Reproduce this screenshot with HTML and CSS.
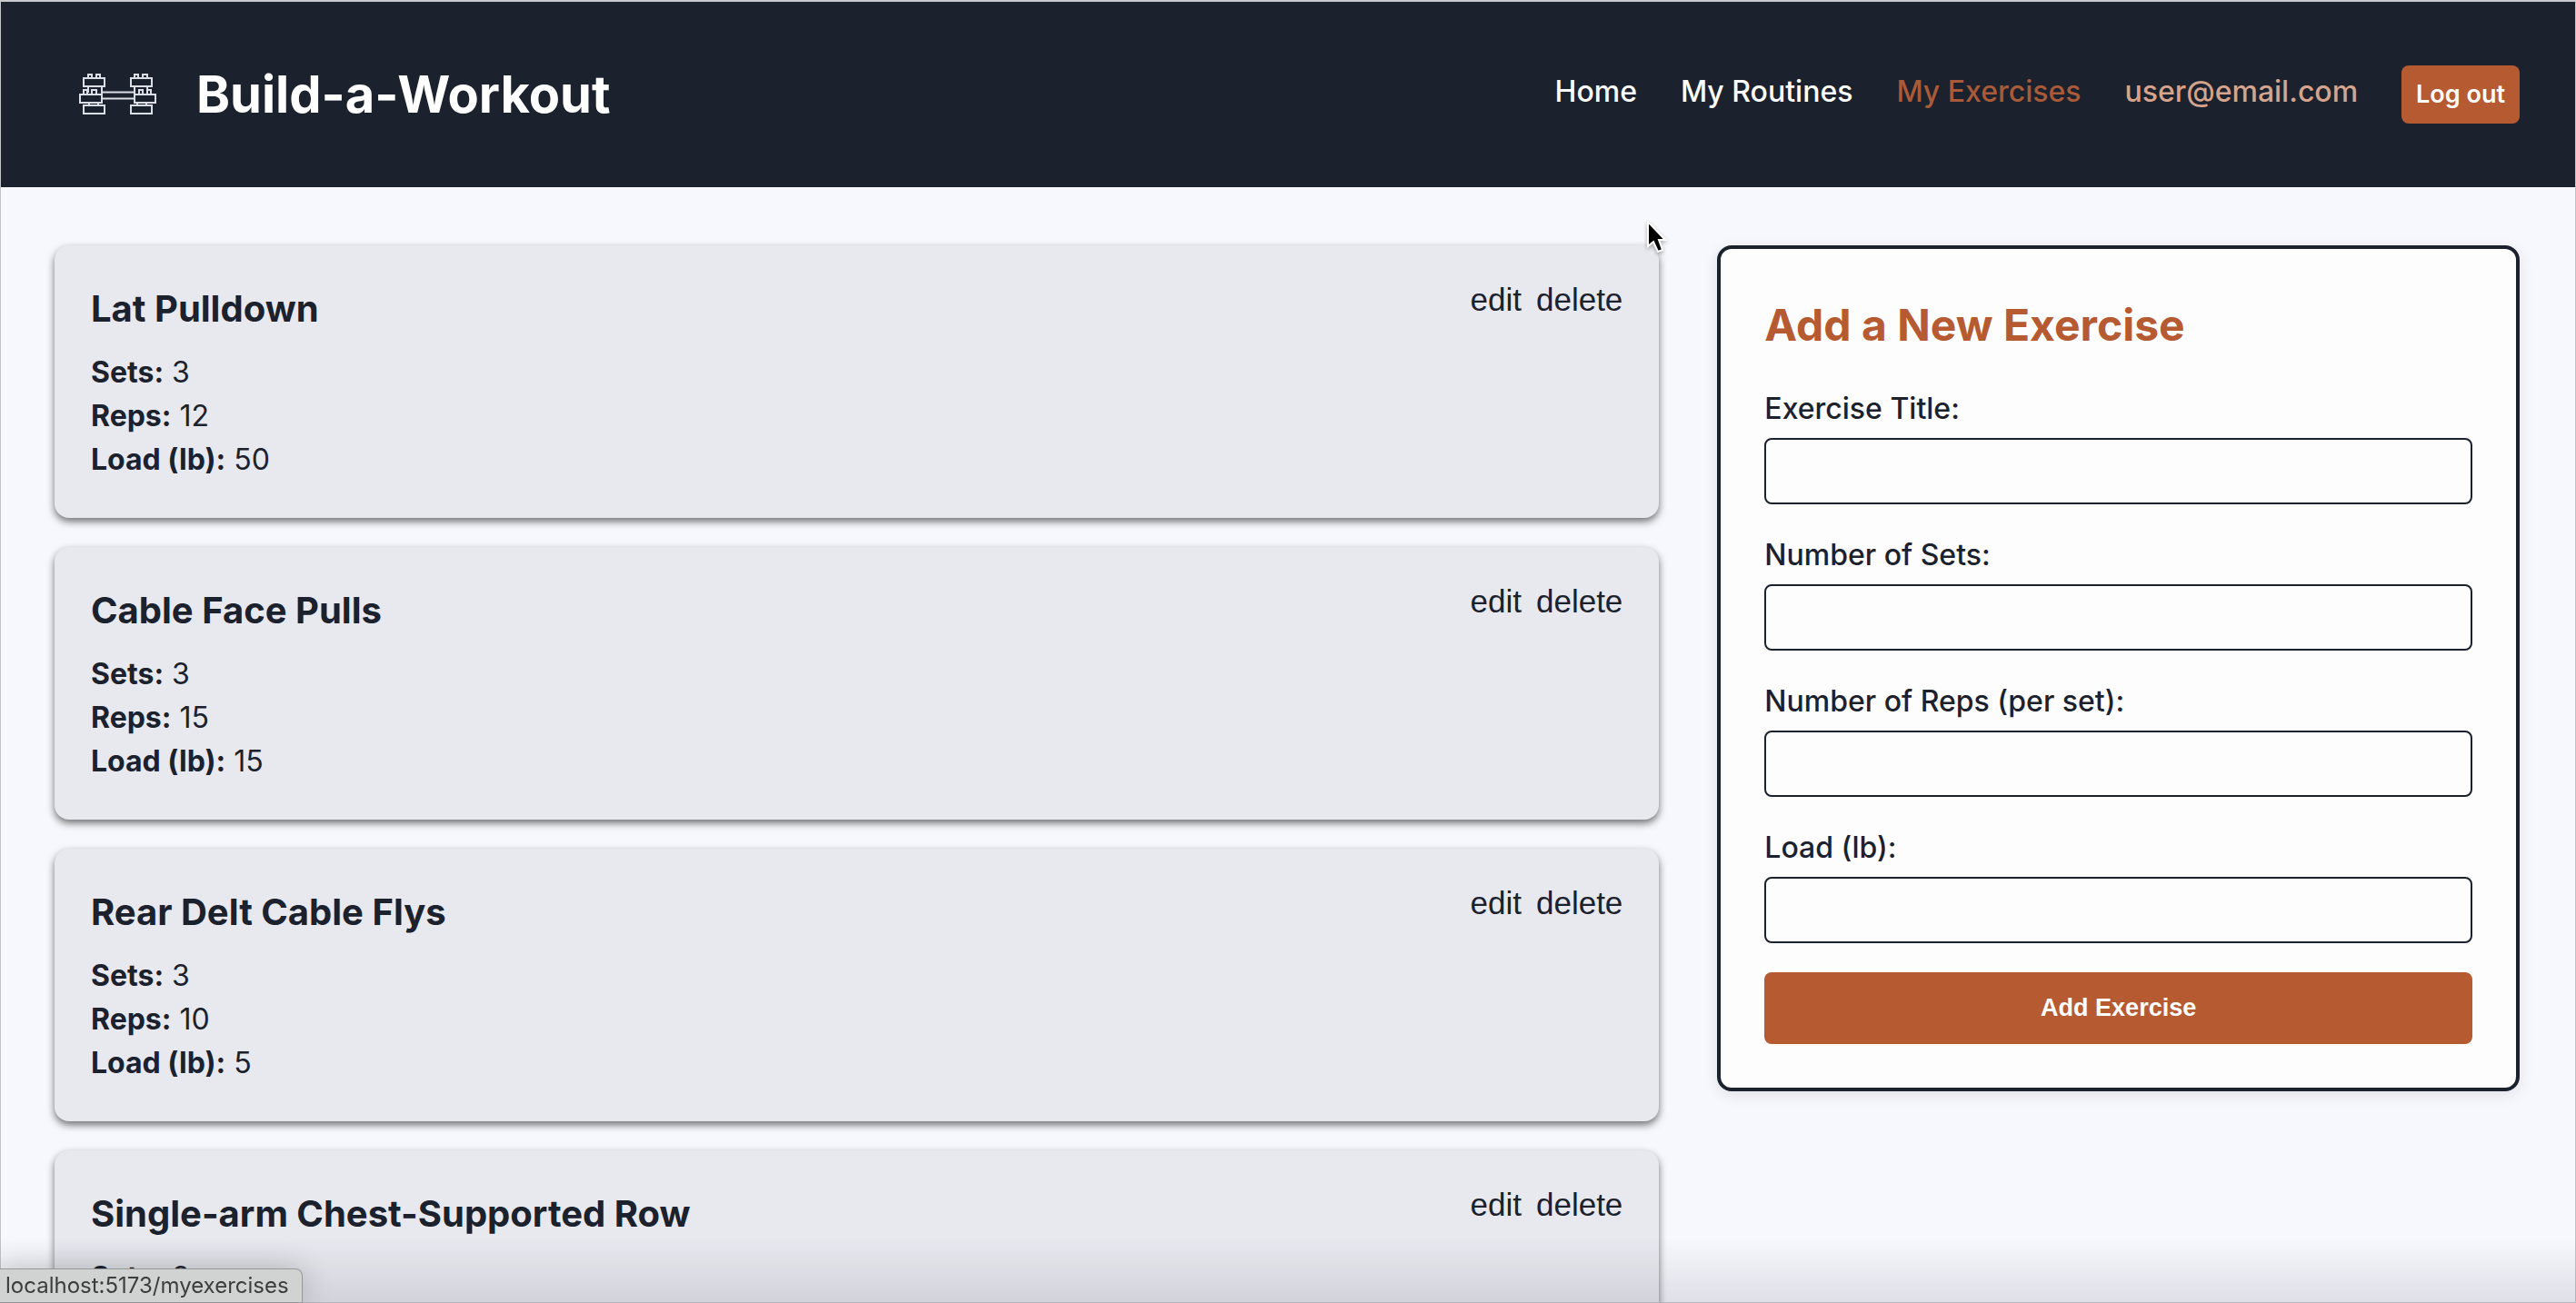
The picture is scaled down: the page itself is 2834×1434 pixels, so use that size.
FILE: index.html
```html
<!DOCTYPE html>
<html lang="en">
<head>
<meta charset="utf-8">
<meta name="viewport" content="width=device-width, initial-scale=1">
<title>Build-a-Workout</title>
<link rel="stylesheet" href="styles.css">
</head>
<body>
<header class="site-header">
  <a class="brand" href="#">
    <svg class="brand-icon" viewBox="0 0 86 48" aria-hidden="true">
      <g fill="none" stroke="#dcdee6" stroke-width="2">
        <path d="M26 21.500H62M26 28.500H62"/>
        <path d="M6 6H29V15H6zM11 6V2H15V6M20 6V2H24V6M11 15V22M26 15V24"/>
        <path d="M2 24H26V33H2zM6 24V19H10V24M15 24V19H20V24M12 33V36M22 33V36"/>
        <path d="M6 36H29V45H6z"/>
        <path d="M58 6H81V15H58zM62 6V2H66V6M71 6V2H76V6M62 15V24M76 15V22"/>
        <path d="M62 24H85V33H62zM67 24V19H71V24M76 24V19H80V24M65 33V36M75 33V36"/>
        <path d="M58 36H81V45H58z"/>
      </g>
    </svg>
    <span class="brand-name">Build-a-Workout</span>
  </a>
  <nav class="nav">
    <a href="#">Home</a>
    <a href="#">My Routines</a>
    <a class="active" href="#">My Exercises</a>
    <a class="user" href="#">user@email.com</a>
    <button class="logout" type="button">Log out</button>
  </nav>
</header>
<main class="content">
  <section class="exercises">
    <article class="card">
      <div class="details">
        <h2>Lat Pulldown</h2>
        <p><strong>Sets:</strong> 3</p>
        <p><strong>Reps:</strong> 12</p>
        <p><strong>Load (lb):</strong> 50</p>
      </div>
      <div class="actions"><button type="button">edit</button><button type="button">delete</button></div>
    </article>
    <article class="card">
      <div class="details">
        <h2>Cable Face Pulls</h2>
        <p><strong>Sets:</strong> 3</p>
        <p><strong>Reps:</strong> 15</p>
        <p><strong>Load (lb):</strong> 15</p>
      </div>
      <div class="actions"><button type="button">edit</button><button type="button">delete</button></div>
    </article>
    <article class="card">
      <div class="details">
        <h2>Rear Delt Cable Flys</h2>
        <p><strong>Sets:</strong> 3</p>
        <p><strong>Reps:</strong> 10</p>
        <p><strong>Load (lb):</strong> 5</p>
      </div>
      <div class="actions"><button type="button">edit</button><button type="button">delete</button></div>
    </article>
    <article class="card">
      <div class="details">
        <h2>Single-arm Chest-Supported Row</h2>
        <p><strong>Sets:</strong> 3</p>
      </div>
      <div class="actions"><button type="button">edit</button><button type="button">delete</button></div>
    </article>
  </section>
  <form class="add-form">
    <h3>Add a New Exercise</h3>
    <label for="title">Exercise Title:</label>
    <input id="title" type="text">
    <label for="sets">Number of Sets:</label>
    <input id="sets" type="text">
    <label for="reps">Number of Reps (per set):</label>
    <input id="reps" type="text">
    <label for="load">Load (lb):</label>
    <input id="load" type="text">
    <button class="submit" type="button">Add Exercise</button>
  </form>
</main>
<div class="shade"></div>
<div class="status">localhost:5173/myexercises</div>
<svg class="cursor" viewBox="0 0 24 38" aria-hidden="true">
  <path d="M2 1V28L8 23L13 34L18 32L14 21H21z" fill="#000" stroke="#fff" stroke-width="2"/>
</svg>
</body>
</html>
```
FILE: styles.css
```css
* {
  box-sizing: border-box;
  margin: 0;
  padding: 0;
}

body {
  height: 100vh;
  overflow: hidden;
  border: 1px solid #c4c5ca;
  border-top: 2px solid #c9cacd;
  background: #f7f8fd;
  color: #1b212d;
  font-family: Inter, "Liberation Sans", sans-serif;
  font-size: 32px;
  line-height: 48px;
}

button {
  border: 0;
  font-family: "Liberation Sans", sans-serif;
  cursor: pointer;
}

.site-header {
  display: flex;
  align-items: center;
  justify-content: space-between;
  margin: 0 -1px;
  padding: 64px 62px 64px 86px;
  background: #1b212d;
}

.brand {
  display: flex;
  align-items: center;
  gap: 44px;
  color: #fff;
  text-decoration: none;
}

.brand-icon {
  width: 86px;
  height: 48px;
}

.brand-name {
  font-size: 56px;
  font-weight: 700;
  line-height: 76px;
}

.nav {
  display: flex;
  align-items: center;
  gap: 48px;
}

.nav a {
  padding-bottom: 6px;
  color: #fff;
  font-size: 32px;
  font-weight: 500;
  text-decoration: none;
}

.nav .active {
  color: #a95a38;
}

.nav .user {
  color: #d6a48c;
}

.logout {
  padding: 8px 16px;
  border-radius: 8px;
  background: #b65a32;
  color: #fff;
  font-family: Inter, sans-serif;
  font-size: 27px;
  font-weight: 600;
  line-height: 48px;
}

.content {
  display: grid;
  grid-template-columns: 2fr 1fr;
  align-items: start;
  gap: 64px;
  padding: 64px 61px 0 59px;
}

.exercises {
  display: grid;
  gap: 32px;
}

.card {
  display: flex;
  align-items: flex-start;
  justify-content: space-between;
  padding: 40px;
  border-radius: 16px;
  background: #e8e9ef;
  box-shadow: 0 4px 8px rgba(0, 0, 0, 0.55);
}

.card h2 {
  margin-bottom: 16px;
  font-size: 40px;
  font-weight: 700;
  line-height: 60px;
}

.actions {
  display: flex;
  gap: 16px;
}

.actions button {
  background: none;
  color: #1b212d;
  font-size: 35px;
  line-height: 40px;
}

.add-form {
  display: flex;
  flex-direction: column;
  padding: 48px;
  border: 4px solid #1b212d;
  border-radius: 16px;
  background: #fdfdfe;
  box-shadow: 0 4px 16px rgba(27, 33, 45, 0.1);
}

.add-form h3 {
  margin-bottom: 32px;
  color: #b65a32;
  font-size: 48px;
  font-weight: 700;
  line-height: 72px;
}

.add-form label {
  margin-bottom: 8px;
  font-weight: 500;
}

.add-form input {
  height: 73px;
  margin-bottom: 32px;
  padding: 0 16px;
  border: 2px solid #1b212d;
  border-radius: 8px;
  background: #fdfdfe;
  font-size: 32px;
}

.submit {
  height: 79px;
  border-radius: 8px;
  background: #b65a32;
  color: #fff;
  font-size: 27px;
  font-weight: 700;
}

.shade {
  position: fixed;
  right: 0;
  bottom: 0;
  left: 0;
  height: 72px;
  background: linear-gradient(rgba(60, 65, 85, 0), rgba(60, 65, 85, 0.13));
  pointer-events: none;
}

.status {
  position: fixed;
  bottom: 0;
  left: 0;
  padding: 0 14px 0 6px;
  border: 1px solid #96989a;
  border-left: 0;
  border-radius: 0 8px 0 0;
  background: #d0d3d1;
  box-shadow: 0 0 32px rgba(0, 0, 0, 0.2);
  color: #3d3d3f;
  font-size: 24px;
  line-height: 36px;
}

.cursor {
  position: fixed;
  top: 243px;
  left: 1811px;
  width: 24px;
  height: 38px;
  filter: drop-shadow(0 2px 2px rgba(0, 0, 0, 0.3));
}
```
